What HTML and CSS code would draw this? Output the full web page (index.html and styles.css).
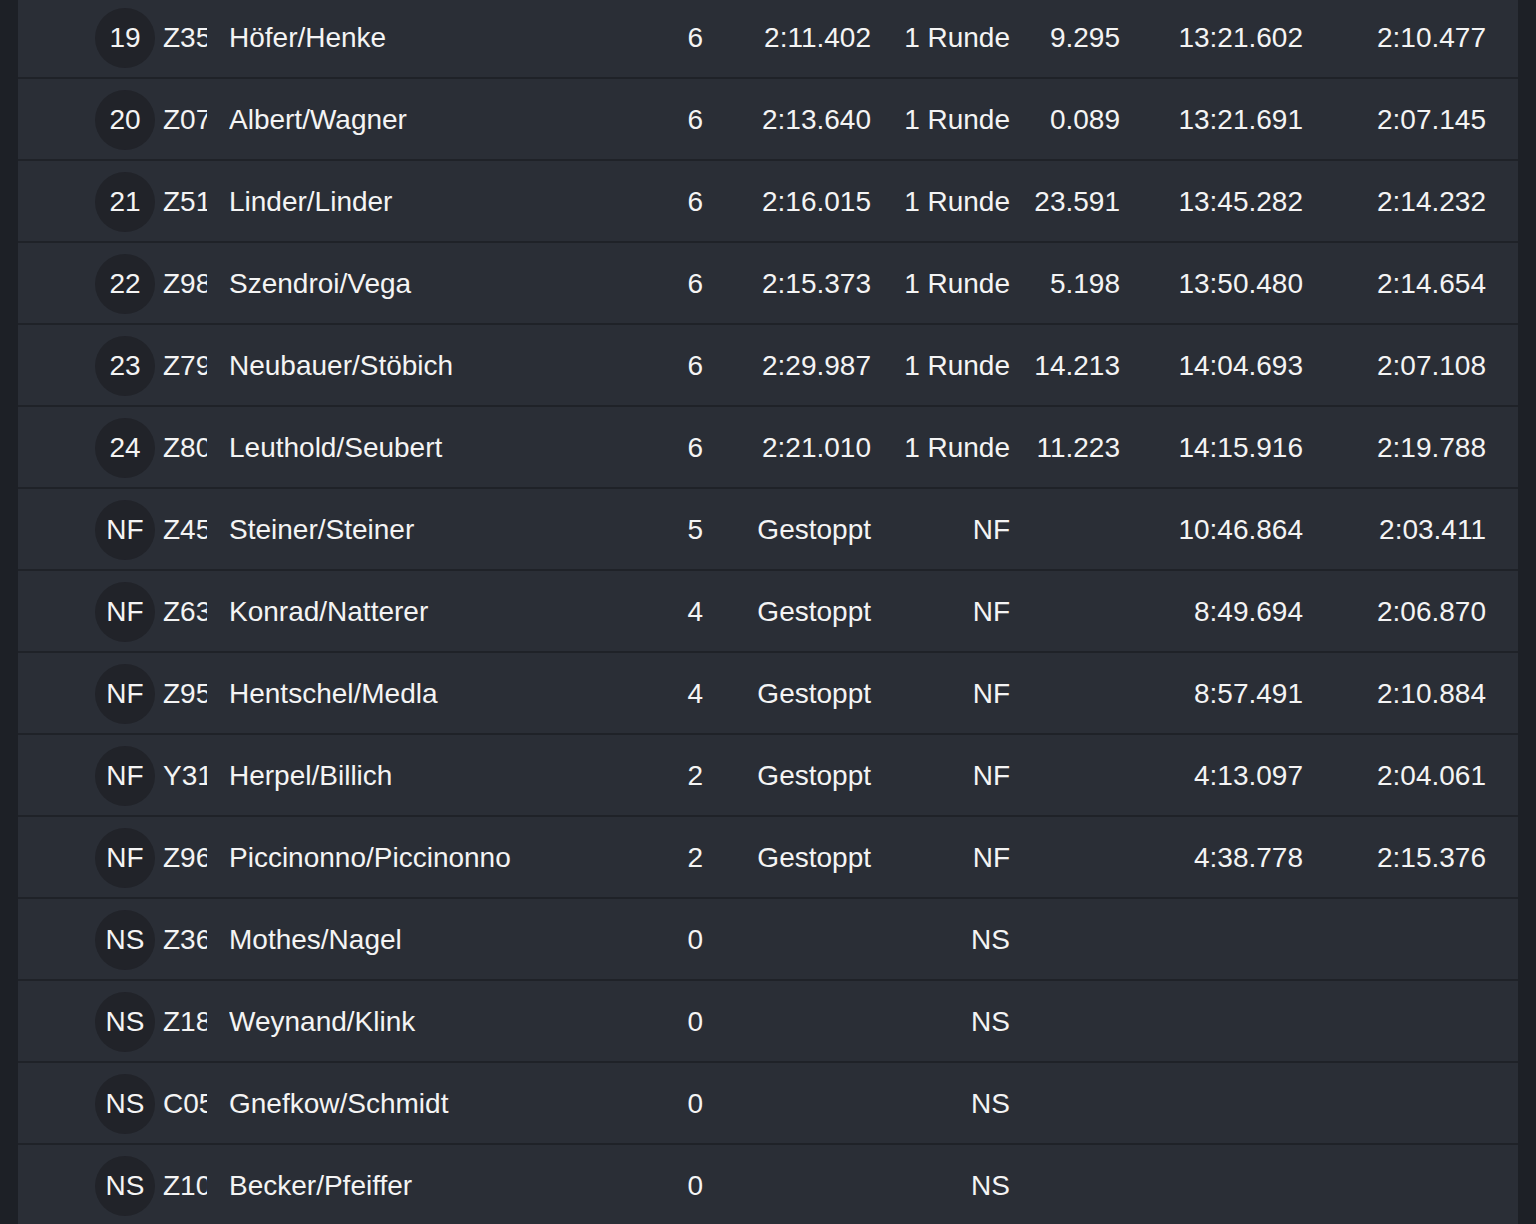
FILE: index.html
```html
<!DOCTYPE html>
<html lang="de">
<head>
<meta charset="utf-8">
<title>Ergebnisse</title>
<link rel="stylesheet" href="styles.css">
</head>
<body>
<div class="page">
  <div class="table">
    <div class="row"><div class="pos">19</div><div class="num">Z35</div><div class="name">Höfer/Henke</div><div class="r">6</div><div class="r">2:11.402</div><div class="r">1 Runde</div><div class="r">9.295</div><div class="r">13:21.602</div><div class="r">2:10.477</div></div>
    <div class="row"><div class="pos">20</div><div class="num">Z07</div><div class="name">Albert/Wagner</div><div class="r">6</div><div class="r">2:13.640</div><div class="r">1 Runde</div><div class="r">0.089</div><div class="r">13:21.691</div><div class="r">2:07.145</div></div>
    <div class="row"><div class="pos">21</div><div class="num">Z51</div><div class="name">Linder/Linder</div><div class="r">6</div><div class="r">2:16.015</div><div class="r">1 Runde</div><div class="r">23.591</div><div class="r">13:45.282</div><div class="r">2:14.232</div></div>
    <div class="row"><div class="pos">22</div><div class="num">Z98</div><div class="name">Szendroi/Vega</div><div class="r">6</div><div class="r">2:15.373</div><div class="r">1 Runde</div><div class="r">5.198</div><div class="r">13:50.480</div><div class="r">2:14.654</div></div>
    <div class="row"><div class="pos">23</div><div class="num">Z79</div><div class="name">Neubauer/Stöbich</div><div class="r">6</div><div class="r">2:29.987</div><div class="r">1 Runde</div><div class="r">14.213</div><div class="r">14:04.693</div><div class="r">2:07.108</div></div>
    <div class="row"><div class="pos">24</div><div class="num">Z80</div><div class="name">Leuthold/Seubert</div><div class="r">6</div><div class="r">2:21.010</div><div class="r">1 Runde</div><div class="r">11.223</div><div class="r">14:15.916</div><div class="r">2:19.788</div></div>
    <div class="row"><div class="pos">NF</div><div class="num">Z45</div><div class="name">Steiner/Steiner</div><div class="r">5</div><div class="r">Gestoppt</div><div class="r">NF</div><div class="r"></div><div class="r">10:46.864</div><div class="r">2:03.411</div></div>
    <div class="row"><div class="pos">NF</div><div class="num">Z63</div><div class="name">Konrad/Natterer</div><div class="r">4</div><div class="r">Gestoppt</div><div class="r">NF</div><div class="r"></div><div class="r">8:49.694</div><div class="r">2:06.870</div></div>
    <div class="row"><div class="pos">NF</div><div class="num">Z95</div><div class="name">Hentschel/Medla</div><div class="r">4</div><div class="r">Gestoppt</div><div class="r">NF</div><div class="r"></div><div class="r">8:57.491</div><div class="r">2:10.884</div></div>
    <div class="row"><div class="pos">NF</div><div class="num">Y31</div><div class="name">Herpel/Billich</div><div class="r">2</div><div class="r">Gestoppt</div><div class="r">NF</div><div class="r"></div><div class="r">4:13.097</div><div class="r">2:04.061</div></div>
    <div class="row"><div class="pos">NF</div><div class="num">Z96</div><div class="name">Piccinonno/Piccinonno</div><div class="r">2</div><div class="r">Gestoppt</div><div class="r">NF</div><div class="r"></div><div class="r">4:38.778</div><div class="r">2:15.376</div></div>
    <div class="row"><div class="pos">NS</div><div class="num">Z36</div><div class="name">Mothes/Nagel</div><div class="r">0</div><div class="r"></div><div class="r">NS</div><div class="r"></div><div class="r"></div><div class="r"></div></div>
    <div class="row"><div class="pos">NS</div><div class="num">Z18</div><div class="name">Weynand/Klink</div><div class="r">0</div><div class="r"></div><div class="r">NS</div><div class="r"></div><div class="r"></div><div class="r"></div></div>
    <div class="row"><div class="pos">NS</div><div class="num">C05</div><div class="name">Gnefkow/Schmidt</div><div class="r">0</div><div class="r"></div><div class="r">NS</div><div class="r"></div><div class="r"></div><div class="r"></div></div>
    <div class="row"><div class="pos">NS</div><div class="num">Z10</div><div class="name">Becker/Pfeiffer</div><div class="r">0</div><div class="r"></div><div class="r">NS</div><div class="r"></div><div class="r"></div><div class="r"></div></div>
  </div>
</div>
</body>
</html>
```
FILE: styles.css
```css
html, body {
  margin: 0;
  padding: 0;
  background: #1d2026;
  height: 100%;
  overflow: hidden;
}
.page {
  margin: -3px 18px 0 18px;
  background: #2a2e36;
  min-height: 1240px;
  font-family: "Liberation Sans", Arial, Helvetica, sans-serif;
  font-size: 28px;
  color: #f4f4f4;
}
.table {
  display: flex;
  flex-direction: column;
}
.row {
  display: grid;
  grid-template-columns: 60px 74px 421px 53px 168px 139px 110px 183px 183px;
  align-items: center;
  height: 79px;
  padding-top: 1px;
  padding-left: 77px;
  border-bottom: 2px solid #1f2228;
  white-space: nowrap;
}
.pos {
  width: 60px;
  height: 60px;
  border-radius: 50%;
  background: #212329;
  display: flex;
  align-items: center;
  justify-content: center;
}
.num {
  margin-left: 8px;
  width: 44px;
  overflow: hidden;
}
.name {
  overflow: hidden;
}
.r {
  text-align: right;
}
```
